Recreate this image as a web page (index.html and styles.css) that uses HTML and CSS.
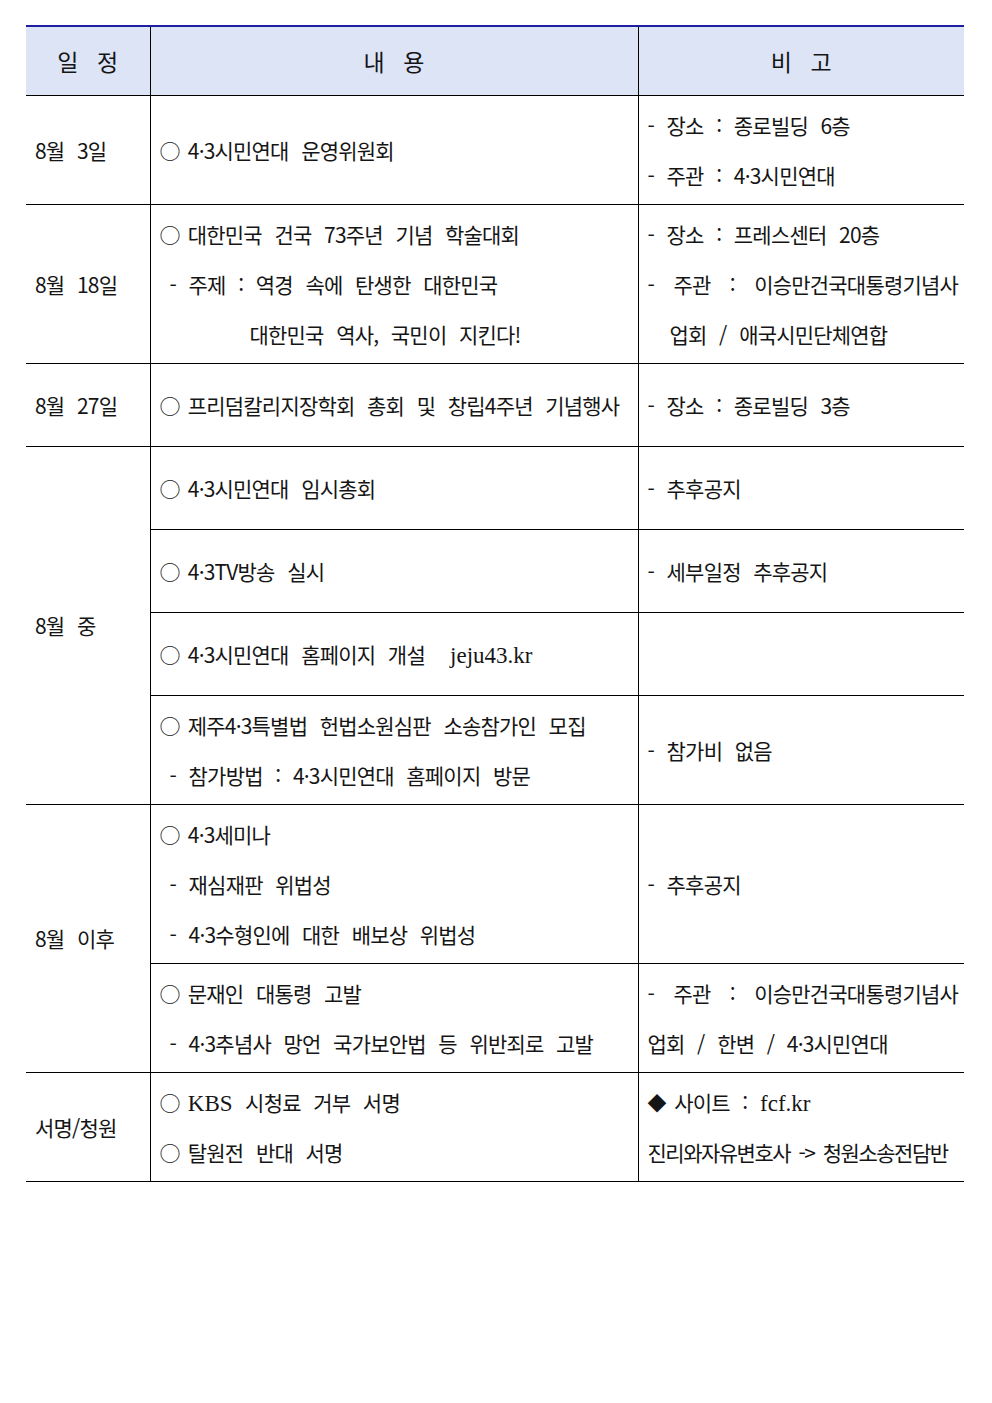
FILE: index.html
```html
<!DOCTYPE html>
<html lang="ko">
<head>
<meta charset="utf-8">
<title>일정</title>
<link rel="stylesheet" href="styles.css">
</head>
<body>
<table class="sched">
  <colgroup>
    <col class="c-date">
    <col class="c-body">
    <col class="c-note">
  </colgroup>
  <thead>
    <tr class="head">
      <th>일 정</th>
      <th>내 용</th>
      <th>비 고</th>
    </tr>
  </thead>
  <tbody>
    <tr>
      <td class="date">8월 3일</td>
      <td><div class="ln"><span class="mk">○ </span>4·3시민연대 운영위원회</div></td>
      <td>
        <div class="ln">- 장소 : 종로빌딩 6층</div>
        <div class="ln">- 주관 : 4·3시민연대</div>
      </td>
    </tr>
    <tr>
      <td class="date">8월 18일</td>
      <td>
        <div class="ln"><span class="mk">○ </span>대한민국 건국 73주년 기념 학술대회</div>
        <div class="ln sub">- 주제 : 역경 속에 탄생한 대한민국</div>
        <div class="ln deep">대한민국 역사, 국민이 지킨다!</div>
      </td>
      <td>
        <div class="ln">- 장소 : 프레스센터 20층</div>
        <div class="ln just">- 주관 : 이승만건국대통령기념사</div>
        <div class="ln hang">업회 / 애국시민단체연합</div>
      </td>
    </tr>
    <tr>
      <td class="date">8월 27일</td>
      <td><div class="ln"><span class="mk">○ </span>프리덤칼리지장학회 총회 및 창립4주년 기념행사</div></td>
      <td><div class="ln">- 장소 : 종로빌딩 3층</div></td>
    </tr>
    <tr>
      <td class="date" rowspan="4">8월 중</td>
      <td><div class="ln"><span class="mk">○ </span>4·3시민연대 임시총회</div></td>
      <td><div class="ln">- 추후공지</div></td>
    </tr>
    <tr>
      <td><div class="ln"><span class="mk">○ </span>4·3TV방송 실시</div></td>
      <td><div class="ln">- 세부일정 추후공지</div></td>
    </tr>
    <tr>
      <td><div class="ln"><span class="mk">○ </span>4·3시민연대 홈페이지 개설 &nbsp;<span class="latin">jeju43.kr</span></div></td>
      <td></td>
    </tr>
    <tr>
      <td>
        <div class="ln"><span class="mk">○ </span>제주4·3특별법 헌법소원심판 소송참가인 모집</div>
        <div class="ln sub">- 참가방법 : 4·3시민연대 홈페이지 방문</div>
      </td>
      <td><div class="ln">- 참가비 없음</div></td>
    </tr>
    <tr>
      <td class="date" rowspan="2">8월 이후</td>
      <td>
        <div class="ln"><span class="mk">○ </span>4·3세미나</div>
        <div class="ln sub">- 재심재판 위법성</div>
        <div class="ln sub">- 4·3수형인에 대한 배보상 위법성</div>
      </td>
      <td><div class="ln">- 추후공지</div></td>
    </tr>
    <tr>
      <td>
        <div class="ln"><span class="mk">○ </span>문재인 대통령 고발</div>
        <div class="ln sub">- 4·3추념사 망언 국가보안법 등 위반죄로 고발</div>
      </td>
      <td>
        <div class="ln just">- 주관 : 이승만건국대통령기념사</div>
        <div class="ln">업회 / 한변 / 4·3시민연대</div>
      </td>
    </tr>
    <tr>
      <td class="date">서명/청원</td>
      <td>
        <div class="ln"><span class="mk">○ </span><span class="latin">KBS</span> 시청료 거부 서명</div>
        <div class="ln"><span class="mk">○ </span>탈원전 반대 서명</div>
      </td>
      <td>
        <div class="ln"><span class="mk dia">◆ </span>사이트 : <span class="latin">fcf.kr</span></div>
        <div class="ln tight">진리와자유변호사 -&gt; 청원소송전담반</div>
      </td>
    </tr>
  </tbody>
</table>
</body>
</html>
```

FILE: styles.css
```css
html, body {
  margin: 0;
  padding: 0;
  background: #ffffff;
}

body {
  padding: 25px 28px 0 26px;
  font-family: "Noto Sans CJK KR", "Noto Sans", sans-serif;
  color: #151515;
}

.sched {
  width: 938px;
  border-collapse: collapse;
  table-layout: fixed;
  font-size: 21px;
  letter-spacing: -0.8px;
  word-spacing: 7.5px;
}

.c-date { width: 124px; }
.c-body { width: 488px; }
.c-note { width: 326px; }

.head {
  height: 69px;
  background: #dce4f6;
}

.head th {
  border-top: 2px solid #1e1ea0;
  border-bottom: 1px solid #000;
  border-left: 1px solid #000;
  font-weight: normal;
  font-size: 23px;
  letter-spacing: 0;
  word-spacing: 12px;
  text-align: center;
  vertical-align: middle;
  padding: 0;
}

.head th:first-child { border-left: none; }

.sched tbody tr {
  height: 83px;
}

.sched td {
  border-top: 1px solid #000;
  border-bottom: 1px solid #000;
  border-left: 1px solid #000;
  padding: 4px 6px 4px 9px;
  vertical-align: middle;
  white-space: nowrap;
}

.sched td.date {
  border-left: none;
  padding-left: 9px;
}

.ln {
  line-height: 50px;
  height: 50px;
}

.mk {
  word-spacing: 3px;
}

.mk.dia {
  font-size: 19px;
  word-spacing: 4px;
}

.sub { padding-left: 10px; }
.deep { padding-left: 90px; }
.hang { padding-left: 22px; }

.tight {
  letter-spacing: -1.5px;
  word-spacing: 4px;
}

.just {
  text-align: justify;
  text-align-last: justify;
}

.latin {
  font-family: "Liberation Serif", serif;
  letter-spacing: 0;
  word-spacing: 0;
  font-size: 23px;
}
```
